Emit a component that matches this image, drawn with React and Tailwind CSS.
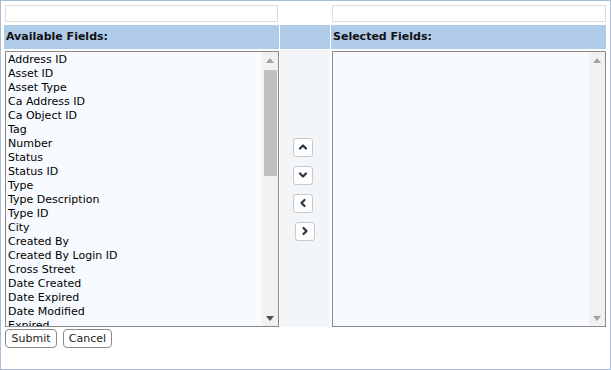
import React from "react";

const fields = [
  "Address ID","Asset ID","Asset Type","Ca Address ID","Ca Object ID","Tag","Number","Status","Status ID","Type","Type Description","Type ID","City","Created By","Created By Login ID","Cross Street","Date Created","Date Expired","Date Modified","Expired","Facility ID","Feature ID","Geometry","Install Date","Last Inspected","Latitude","Location","Longitude","Manufacturer","Material","Modified By","Modified By Login ID","Notes","Owner","Parcel ID","Priority","Route","Serial Number","Size","State","Street Name","Street Number","Unit","Warranty Date","Zip Code",
];

function Chev({ dir }) {
  const pts = {
    up: "2,6.5 5,3.5 8,6.5",
    down: "2,3.5 5,6.5 8,3.5",
    left: "6.5,2 3.5,5 6.5,8",
    right: "3.5,2 6.5,5 3.5,8",
  }[dir];
  return (
    <svg width="10" height="10" viewBox="0 0 10 10">
      <polyline points={pts} fill="none" stroke="#2b3542" strokeWidth="2.2" strokeLinecap="round" strokeLinejoin="round" />
    </svg>
  );
}

function ArrowBtn({ dir, extra = "" }) {
  return (
    <button className={`w-[20px] h-[19px] flex items-center justify-center bg-white border border-[#c9c9c9] rounded-[3px] ${extra}`}>
      <Chev dir={dir} />
    </button>
  );
}

function Tri({ up, color }) {
  return (
    <svg width="8" height="5" viewBox="0 0 8 5">
      <polygon points={up ? "0,5 8,5 4,0" : "0,0 8,0 4,5"} fill={color} />
    </svg>
  );
}

function ScrollBar({ thumb }) {
  return (
    <div className="w-[16px] h-full bg-[#f1f1f1] flex flex-col shrink-0">
      <div className="h-[16px] flex items-center justify-center shrink-0">
        <Tri up color="#a3a3a3" />
      </div>
      <div className="flex-1">
        {thumb && <div className="ml-[2px] mr-[1px] mt-[2px] h-[106px] bg-[#c1c1c1]"></div>}
      </div>
      <div className="h-[16px] flex items-center justify-center shrink-0">
        <Tri color={thumb ? "#505050" : "#a3a3a3"} />
      </div>
    </div>
  );
}

export default function App() {
  const font = { fontFamily: '"DejaVu Sans", Verdana, sans-serif' };
  return (
    <div className="w-[611px] h-[370px] bg-white border border-[#a9bcd6] p-[3px] text-black" style={font}>
      <div className="grid grid-cols-[275px_50px_275px] grid-rows-[19px_25px_277px] gap-x-[1px] gap-y-[1px]">
        <div className="pl-[1px] pt-[1px]">
          <div className="w-[273px] h-[17px] border border-[#dcdcdc] bg-white"></div>
        </div>
        <div></div>
        <div className="pl-[1px] pt-[1px]">
          <div className="w-[274px] h-[17px] border border-[#dcdcdc] bg-white"></div>
        </div>

        <div className="bg-[#b0cbe8] mt-[1px] flex items-center pl-[2px] text-[11px] font-bold text-[#111]">Available Fields:</div>
        <div className="bg-[#b0cbe8] mt-[1px]"></div>
        <div className="bg-[#b0cbe8] mt-[1px] flex items-center pl-[2px] text-[11px] font-bold text-[#111]">Selected Fields:</div>

        <div className="pl-[1px] pt-[1px]">
          <div className="h-[276px] w-[274px] border border-[#8a8a8a] bg-[#f7fbff] flex">
            <div className="flex-1 overflow-hidden pl-[2px] pt-[1px] text-[11px] leading-[14px]">
              {fields.map((f) => (
                <div key={f} className="whitespace-nowrap">{f}</div>
              ))}
            </div>
            <ScrollBar thumb />
          </div>
        </div>
        <div className="bg-[#f3f6f9] flex flex-col items-center justify-center gap-[9px] pr-[5px] pt-[1px]">
          <ArrowBtn dir="up" />
          <ArrowBtn dir="down" />
          <ArrowBtn dir="left" />
          <ArrowBtn dir="right" extra="ml-[4px]" />
        </div>
        <div className="pl-[1px] pt-[1px]">
          <div className="h-[276px] w-[274px] border border-[#8a8a8a] bg-[#f7fbff] flex">
            <div className="flex-1"></div>
            <ScrollBar />
          </div>
        </div>
      </div>
      <div className="flex gap-[6px] pl-[1px] pt-[2px]">
        <button className="h-[19px] w-[52px] border border-[#8a8a8a] rounded-[4px] bg-white text-[11px] text-[#222] leading-[17px]" style={font}>Submit</button>
        <button className="h-[19px] w-[49px] border border-[#8a8a8a] rounded-[4px] bg-white text-[11px] text-[#222] leading-[17px]" style={font}>Cancel</button>
      </div>
    </div>
  );
}
